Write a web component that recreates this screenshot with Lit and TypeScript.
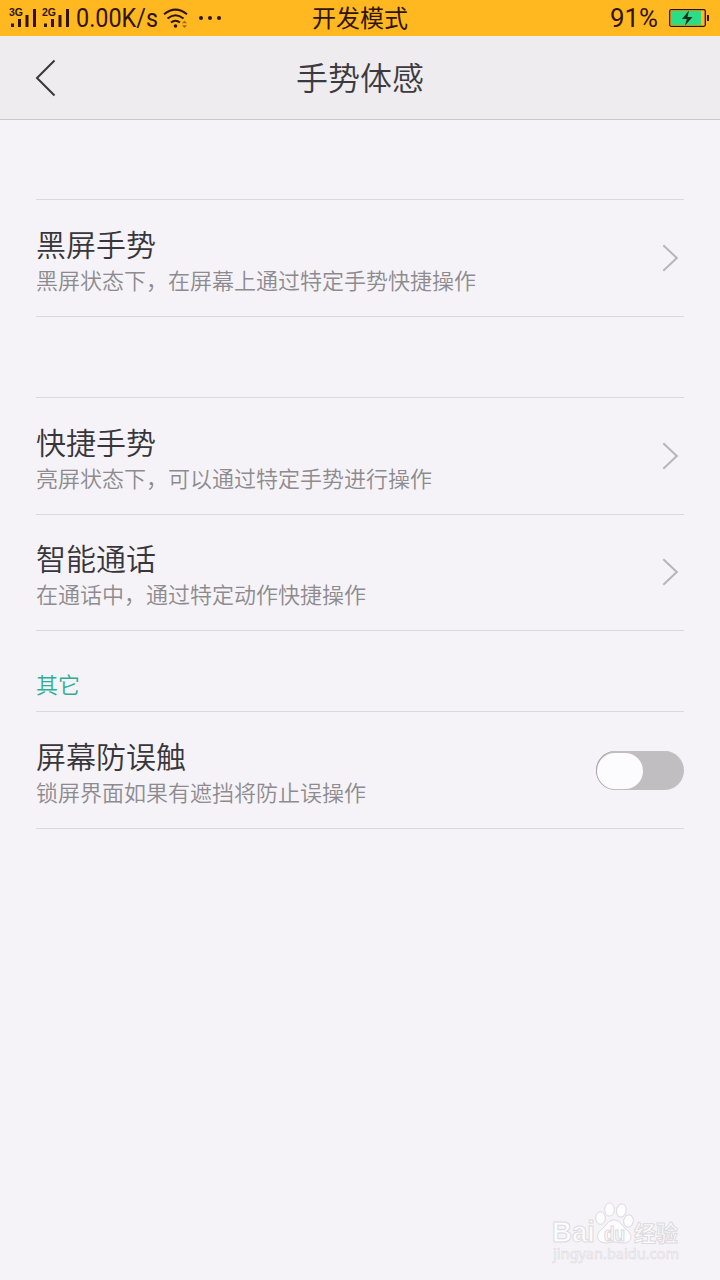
import { LitElement, html, css } from "lit";
import { customElement, property, state } from "lit/decorators.js";

@customElement("status-bar")
class StatusBar extends LitElement {
  static styles = css`
    :host {
      display: grid;
      grid-template-columns: 1fr auto 1fr;
      align-items: center;
      height: 36px;
      background: #ffb81f;
      color: #301400;
      font-size: 24px;
      font-weight: 400;
      line-height: 36px;
    }
    svg { display: block; flex: none; overflow: visible; }
    .left, .right { display: flex; align-items: center; height: 36px; }
    .left { padding-left: 8px; }
    .right { justify-content: flex-end; padding-right: 11px; }
    .mode { height: 36px; line-height: 34px; }
    .signal { margin-right: 1px; }
    .net { font: bold 10px "Liberation Sans", sans-serif; }
    .rate { font: 400 25px Roboto, sans-serif; }
    .percent { font: 400 25px Roboto, sans-serif; }
    .battery { margin-left: 9px; }
    .wifi { margin-left: 3px; }
    .dots { margin-left: 9px; }
  `;

  private signal(net: string) {
    return html`<svg class="signal" width="32" height="36" viewBox="0 0 32 36" fill="#301400">
      <text class="net" x="1" y="16" textLength="14" lengthAdjust="spacingAndGlyphs">${net}</text>
      <rect x="3" y="23.5" width="3" height="3.5" />
      <rect x="10" y="19" width="3" height="8" />
      <rect x="17.5" y="15" width="3" height="12" />
      <rect x="25" y="9" width="3" height="18" />
    </svg>`;
  }

  render() {
    return html`
      <div class="left">
        ${this.signal("3G")}${this.signal("2G")}
        <svg width="86" height="36" viewBox="0 0 86 36" fill="#301400">
          <text class="rate" x="2" y="27" textLength="82" lengthAdjust="spacingAndGlyphs">0.00K/s</text>
        </svg>
        <svg class="wifi" width="26" height="36" viewBox="0 0 26 36" fill="none" stroke="#301400" stroke-width="2">
          <path d="M1 14.2Q12.5 5 24 14.2" />
          <path d="M4.5 18.6Q12.5 11.8 20.5 18.6" />
          <path d="M8 22.6Q12.5 18.8 17 22.6" />
          <circle cx="12.5" cy="26" r="1.8" fill="#301400" stroke="none" />
          <path d="M19 23.2l2.5-2.7 2.5 2.7zM19 25.2l2.5 2.7 2.5-2.7z" fill="#a06a10" stroke="none" />
        </svg>
        <svg class="dots" width="26" height="36" viewBox="0 0 26 36" fill="#301400">
          <circle cx="3" cy="18" r="2" /><circle cx="12" cy="18" r="2" /><circle cx="21" cy="18" r="2" />
        </svg>
      </div>
      <div class="mode">开发模式</div>
      <div class="right">
        <svg width="52" height="36" viewBox="0 0 52 36" fill="#301400">
          <text class="percent" x="2" y="27" textLength="48" lengthAdjust="spacingAndGlyphs">91%</text>
        </svg>
        <svg class="battery" width="40" height="36" viewBox="0 0 40 36">
          <rect x="0.7" y="9.7" width="35.6" height="16.6" rx="1.5" fill="none" stroke="#301400" stroke-width="1.3" />
          <rect x="2" y="11" width="30" height="14" fill="#2ade87" />
          <rect x="38" y="15" width="2" height="6" fill="#301400" />
          <path d="M20 10.5L13 19h4.8L16 25.5 23.5 17h-5z" fill="#1c2c18" />
        </svg>
      </div>
    `;
  }
}

@customElement("setting-row")
class SettingRow extends LitElement {
  @property() heading = "";
  @property() note = "";
  @property({ type: Boolean }) toggle = false;
  @state() private on = false;

  static styles = css`
    :host {
      display: flex;
      justify-content: space-between;
      box-sizing: border-box;
      height: 117px;
      border-bottom: 1px solid #dad8dc;
    }
    .text { padding-top: 22px; }
    .heading { font-size: 30px; line-height: 42px; color: #38363b; }
    .note { font-size: 22px; line-height: 30px; color: #8d8b8f; }
    .arrow { display: block; margin: 43px 5px 0 0; }
    .switch {
      display: flex;
      box-sizing: border-box;
      width: 88px;
      height: 39px;
      margin-top: 39px;
      padding: 1px;
      border: 0;
      border-radius: 20px;
      background: #c0bec1;
      box-shadow: inset 1px 0 0 #a5a3a6;
    }
    .switch.on { justify-content: flex-end; background: #31b698; }
    .knob { width: 46px; height: 36px; margin-top: 0.5px; border-radius: 18px; background: #fcfbfd; }
  `;

  render() {
    return html`
      <div class="text">
        <div class="heading">${this.heading}</div>
        <div class="note">${this.note}</div>
      </div>
      ${this.toggle
        ? html`<button class="switch ${this.on ? "on" : ""}" @click=${() => (this.on = !this.on)}>
            <span class="knob"></span>
          </button>`
        : html`<svg class="arrow" width="18" height="30" viewBox="0 0 18 30" fill="none" stroke="#b7b5b9" stroke-width="2">
            <path d="M2.3 2.2L15.8 15 2.3 27.8" />
          </svg>`}
    `;
  }
}

@customElement("site-mark")
class SiteMark extends LitElement {
  static styles = css`
    :host { display: block; }
    svg { display: block; }
    .latin { font: bold 29px "Liberation Sans", sans-serif; }
    .du { font: bold 21px "Liberation Sans", sans-serif; }
    .han { font: bold 22px "Noto Sans CJK SC", sans-serif; }
    .url { font: 14px "Noto Sans", sans-serif; }
  `;

  render() {
    return html`
      <svg width="136" height="70" viewBox="0 0 136 70" fill="#fdfcfe" stroke="#dcdade" stroke-width="1">
        <text class="latin" x="4" y="42" textLength="43" lengthAdjust="spacingAndGlyphs">Bai</text>
        <ellipse cx="52.5" cy="18" rx="4.8" ry="6.3" />
        <ellipse cx="61.5" cy="9.5" rx="4.8" ry="6.6" />
        <ellipse cx="73.3" cy="10.5" rx="4.8" ry="6.6" transform="rotate(12 73.3 10.5)" />
        <ellipse cx="80.5" cy="21" rx="4.8" ry="6.2" transform="rotate(10 80.5 21)" />
        <path d="M66 20C60 20 58 26 53 30C48 34 48 42 57 43C61 43 63 42 66 42C70 42 72 43 76 43C85 42 84 34 79 30C74 26 72 20 66 20Z" />
        <text class="du" x="56" y="41" textLength="21" lengthAdjust="spacingAndGlyphs" stroke-width="1.2">du</text>
        <text class="han" x="86" y="41" textLength="44" lengthAdjust="spacingAndGlyphs">经验</text>
        <text class="url" x="5" y="59" textLength="126" lengthAdjust="spacingAndGlyphs" stroke-width="0.6">jingyan.baidu.com</text>
      </svg>
    `;
  }
}

@customElement("app-root")
class AppRoot extends LitElement {
  static styles = css`
    :host {
      display: flex;
      flex-direction: column;
      box-sizing: border-box;
      width: 720px;
      height: 1280px;
      overflow: hidden;
      background: #f5f3f7;
      font-family: "Noto Sans CJK SC", sans-serif;
      font-weight: 350;
    }
    header {
      display: grid;
      grid-template-columns: 1fr auto 1fr;
      align-items: center;
      box-sizing: border-box;
      height: 84px;
      padding: 0 34px;
      background: #eeecef;
      border-bottom: 1px solid #c9c7ca;
    }
    .back { display: block; }
    h1 { margin: 0; padding-bottom: 3px; font-weight: 350; font-size: 32px; line-height: 48px; color: #3c3a3f; }
    main { flex: 1; padding: 0 36px; }
    section { border-top: 1px solid #dad8dc; }
    .first { margin-top: 79px; }
    .second { margin-top: 80px; }
    .label { padding-top: 38px; height: 42px; font-size: 22px; line-height: 29px; color: #2fae93; }
    .short { height: 117px; margin-top: -1px; }
    site-mark { align-self: flex-end; margin-right: 36px; margin-bottom: 10px; }
  `;

  render() {
    return html`
      <status-bar></status-bar>
      <header>
        <svg class="back" width="24" height="40" viewBox="0 0 24 40" fill="none" stroke="#38363b" stroke-width="2">
          <path d="M20.5 2.5L3 20 20.5 37.5" />
        </svg>
        <h1>手势体感</h1>
      </header>
      <main>
        <section class="first">
          <setting-row heading="黑屏手势" note="黑屏状态下，在屏幕上通过特定手势快捷操作"></setting-row>
        </section>
        <section class="second">
          <setting-row heading="快捷手势" note="亮屏状态下，可以通过特定手势进行操作"></setting-row>
          <setting-row class="short" heading="智能通话" note="在通话中，通过特定动作快捷操作"></setting-row>
        </section>
        <div class="label">其它</div>
        <section>
          <setting-row toggle heading="屏幕防误触" note="锁屏界面如果有遮挡将防止误操作"></setting-row>
        </section>
      </main>
      <site-mark></site-mark>
    `;
  }
}
